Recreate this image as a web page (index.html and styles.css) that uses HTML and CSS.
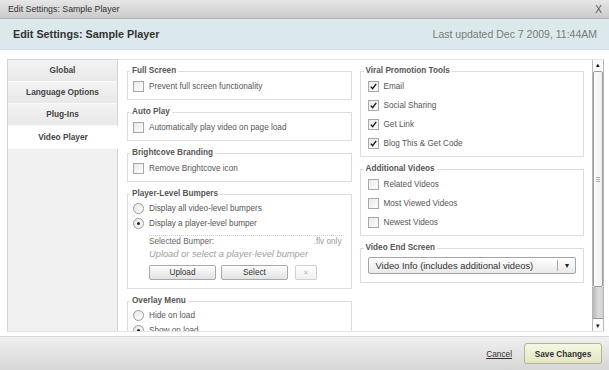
FILE: index.html
```html
<!DOCTYPE html>
<html lang="en">
<head>
    <meta charset="UTF-8">
    <title>Edit Settings: Sample Player</title>
    <link rel="stylesheet" href="styles.css">
</head>
<body>

<div class="dialog">
    <div class="titlebar">
        <span>Edit Settings: Sample Player</span>
        <span class="close">X</span>
    </div>
    <div class="header">
        <h1>Edit Settings: Sample Player</h1>
        <span class="updated">Last updated Dec 7 2009, 11:44AM</span>
    </div>

    <div class="main">
        <div class="panel">
            <ul class="tabs">
                <li>Global</li>
                <li>Language Options</li>
                <li>Plug-Ins</li>
                <li class="active">Video Player</li>
            </ul>

            <div class="scroll">
                <div class="col">
                    <fieldset>
                        <legend>Full Screen</legend>
                        <div class="row"><span class="box"></span>Prevent full screen functionality</div>
                    </fieldset>
                    <fieldset>
                        <legend>Auto Play</legend>
                        <div class="row"><span class="box"></span>Automatically play video on page load</div>
                    </fieldset>
                    <fieldset>
                        <legend>Brightcove Branding</legend>
                        <div class="row"><span class="box"></span>Remove Brightcove icon</div>
                    </fieldset>
                    <fieldset class="radios">
                        <legend>Player-Level Bumpers</legend>
                        <div class="row"><span class="radio"></span>Display all video-level bumpers</div>
                        <div class="row"><span class="radio on"></span>Display a player-level bumper</div>
                        <div class="bumper">
                            <div class="bumper-label"><span>Selected Bumper:</span><span>.flv only</span></div>
                            <div class="hint">Upload or select a player-level bumper</div>
                            <div class="buttons">
                                <button class="btn">Upload</button>
                                <button class="btn">Select</button>
                                <button class="btn clear">&#x2715;</button>
                            </div>
                        </div>
                    </fieldset>
                    <fieldset class="radios">
                        <legend>Overlay Menu</legend>
                        <div class="row"><span class="radio"></span>Hide on load</div>
                        <div class="row"><span class="radio on"></span>Show on load</div>
                    </fieldset>
                </div>

                <div class="col right">
                    <fieldset>
                        <legend>Viral Promotion Tools</legend>
                        <div class="row"><span class="box checked"><svg viewBox="0 0 11 11"><path d="M2.2 5.6 L4.4 8.2 L8.8 2.2"/></svg></span>Email</div>
                        <div class="row"><span class="box checked"><svg viewBox="0 0 11 11"><path d="M2.2 5.6 L4.4 8.2 L8.8 2.2"/></svg></span>Social Sharing</div>
                        <div class="row"><span class="box checked"><svg viewBox="0 0 11 11"><path d="M2.2 5.6 L4.4 8.2 L8.8 2.2"/></svg></span>Get Link</div>
                        <div class="row"><span class="box checked"><svg viewBox="0 0 11 11"><path d="M2.2 5.6 L4.4 8.2 L8.8 2.2"/></svg></span>Blog This &amp; Get Code</div>
                    </fieldset>
                    <fieldset>
                        <legend>Additional Videos</legend>
                        <div class="row"><span class="box"></span>Related Videos</div>
                        <div class="row"><span class="box"></span>Most Viewed Videos</div>
                        <div class="row"><span class="box"></span>Newest Videos</div>
                    </fieldset>
                    <fieldset>
                        <legend>Video End Screen</legend>
                        <div class="select">
                            <span class="select-text">Video Info (includes additional videos)</span>
                            <span class="select-arrow">&#9662;</span>
                        </div>
                    </fieldset>
                </div>
            </div>

            <div class="scrollbar">
                <div class="sb-btn up">&#9652;</div>
                <div class="sb-thumb"><span class="grip"></span></div>
                <div class="sb-track"></div>
                <div class="sb-btn down">&#9662;</div>
            </div>
        </div>
    </div>

    <div class="footer">
        <a href="#" class="cancel">Cancel</a>
        <button class="save">Save Changes</button>
    </div>
</div>

</body>
</html>
```

FILE: styles.css
```css
body {
    margin: 0;
    font-family: Arial, "Liberation Sans", sans-serif;
    background-color: #fff;
    color: #444;
}

.dialog {
    width: 609px;
    height: 370px;
    display: flex;
    flex-direction: column;
    overflow: hidden;
}

/* window title */
.titlebar {
    height: 19px;
    flex: none;
    box-sizing: border-box;
    display: flex;
    align-items: center;
    justify-content: space-between;
    padding: 0 7px 0 8px;
    background: linear-gradient(#e6e6e6, #cbcbcb);
    border-bottom: 1px solid #b5b5b5;
    font-size: 8.8px;
    color: #333;
}

.close {
    font-size: 10px;
    color: #555;
}

.header {
    height: 31px;
    flex: none;
    box-sizing: border-box;
    display: flex;
    align-items: center;
    justify-content: space-between;
    padding: 0 12px 0 13px;
    background-color: #dce9ec;
    border-bottom: 1px solid #d0e0e4;
}

.header h1 {
    margin: 0;
    font-size: 10.8px;
    color: #333;
}

.updated {
    font-size: 10.5px;
    color: #7a7a7a;
}

/* body */
.main {
    flex: 1;
    padding: 9px 5px 0 7px;
}

.panel {
    display: flex;
    height: 273px;
    box-sizing: border-box;
    border-top: 1px solid #e3e3e3;
    border-bottom: 1px solid #e3e3e3;
}

.tabs {
    list-style: none;
    margin: -1px 0 0 0;
    padding: 0;
    width: 111px;
    flex: none;
    box-sizing: border-box;
    background-color: #f0f0f0;
    border: 1px solid #d4d4d4;
    border-bottom: none;
}

.tabs li {
    height: 22px;
    box-sizing: border-box;
    line-height: 21px;
    text-align: center;
    font-size: 8.3px;
    font-weight: bold;
    color: #444;
    background: linear-gradient(#f3f3f3, #e8e8e8);
    border-bottom: 1px solid #fafafa;
}

.tabs li.active {
    background: #fff;
    margin-right: -1px;
    height: 23px;
    line-height: 22px;
}

.scroll {
    flex: 1;
    overflow: hidden;
    display: grid;
    grid-template-columns: 1fr 1fr;
    column-gap: 8px;
    align-items: start;
    padding: 6px 8px 0 9px;
    font-size: 8.2px;
    color: #555;
}

fieldset {
    margin: 0 0 7px;
    padding: 1px 7px 3px 5px;
    border: 1px solid #ddd;
    min-width: 0;
}

legend {
    padding: 0 2px;
    margin-left: -3px;
    font-weight: bold;
    line-height: 10px;
    color: #555;
}

.right fieldset {
    padding-left: 7px;
}

.right legend {
    margin-left: -4px;
}

.row {
    display: flex;
    align-items: center;
    height: 19px;
}

.radios .row {
    height: 15px;
}

.radios .row:first-of-type {
    margin-top: 1px;
}

.box {
    width: 11px;
    height: 11px;
    box-sizing: border-box;
    flex: none;
    margin-right: 5px;
    border: 1px solid #a8a8a8;
    background: linear-gradient(135deg, #e9e9e9, #fdfdfd);
}

.right .box {
    margin-right: 5px;
}

.box svg {
    display: block;
    width: 9px;
    height: 9px;
    fill: none;
    stroke: #1a1a1a;
    stroke-width: 1.7;
}

.radio {
    width: 11px;
    height: 11px;
    box-sizing: border-box;
    flex: none;
    margin-right: 5px;
    border: 1px solid #9a9a9a;
    border-radius: 50%;
    background: linear-gradient(135deg, #e6e6e6, #fff);
    display: flex;
    align-items: center;
    justify-content: center;
}

.radio.on::after {
    content: "";
    width: 3px;
    height: 3px;
    border-radius: 50%;
    background-color: #222;
}

.bumper {
    margin: 4px 0 0 16px;
    border-top: 1px dotted #ccc;
}

.bumper-label {
    display: flex;
    justify-content: space-between;
    height: 11px;
    line-height: 11px;
    padding-right: 2px;
    color: #666;
}

.bumper-label span:last-child {
    color: #999;
}

.hint {
    font-size: 9.3px;
    font-style: italic;
    color: #a0a0a0;
    line-height: 14px;
}

.buttons {
    display: flex;
    gap: 5px;
    margin: 4px 0 5px;
}

.btn {
    width: 67px;
    height: 15px;
    padding: 0;
    font-family: inherit;
    font-size: 8.2px;
    color: #333;
    border: 1px solid #a9a9a9;
    border-radius: 2px;
    background: linear-gradient(#fdfdfd, #e2e2e2);
}

.btn.clear {
    width: 22px;
    margin-left: 2px;
    color: #bbb;
    font-size: 7px;
    border-color: #cfcfcf;
    background: linear-gradient(#fff, #f0f0f0);
}

.select {
    display: flex;
    height: 17px;
    box-sizing: border-box;
    margin: 3px 0 5px;
    border: 1px solid #a5a5a5;
    border-radius: 2px;
    background: linear-gradient(#fff, #e9e9e9);
    font-size: 9.4px;
    color: #333;
}

.select-text {
    flex: 1;
    padding-left: 7px;
    line-height: 15px;
}

.select-arrow {
    width: 17px;
    margin: 2px 0;
    border-left: 1px solid #aaa;
    text-align: center;
    font-size: 8px;
    line-height: 11px;
    color: #222;
}

/* fake scrollbar */
.scrollbar {
    width: 12px;
    flex: none;
    display: flex;
    flex-direction: column;
    box-sizing: border-box;
    border: 1px solid #b8b8b8;
    border-top: none;
    border-bottom: none;
}

.sb-btn {
    height: 11px;
    flex: none;
    box-sizing: border-box;
    background-color: #fafafa;
    font-size: 7px;
    line-height: 10px;
    text-align: center;
    color: #111;
}

.sb-btn.down {
    height: 13px;
    line-height: 13px;
    border-top: 1px solid #999;
}

.sb-thumb {
    height: 216px;
    flex: none;
    box-sizing: border-box;
    border: 1px solid #9c9c9c;
    border-radius: 2px;
    background: linear-gradient(90deg, #fbfbfb, #f1f1f1);
    display: flex;
    align-items: center;
    justify-content: center;
}

.grip {
    width: 4px;
    height: 5px;
    background: repeating-linear-gradient(#aaa 0 1px, transparent 1px 2px);
}

.sb-track {
    flex: 1;
    background: linear-gradient(90deg, #b9b9b9, #dedede 60%, #cfcfcf);
}

/* footer */
.footer {
    height: 34px;
    flex: none;
    box-sizing: border-box;
    display: flex;
    align-items: center;
    justify-content: flex-end;
    gap: 12px;
    padding-right: 7px;
    border-top: 1px solid #d6d6d6;
    background: linear-gradient(#f0f0f0, #d6d6d6);
}

.cancel {
    font-size: 8.3px;
    color: #333;
}

.save {
    width: 78px;
    height: 21px;
    padding: 0;
    font-family: inherit;
    font-size: 8.3px;
    font-weight: bold;
    color: #333;
    border: 1px solid #b3b595;
    border-radius: 3px;
    background: linear-gradient(#f6f7e2, #e3e5c2);
}
```
